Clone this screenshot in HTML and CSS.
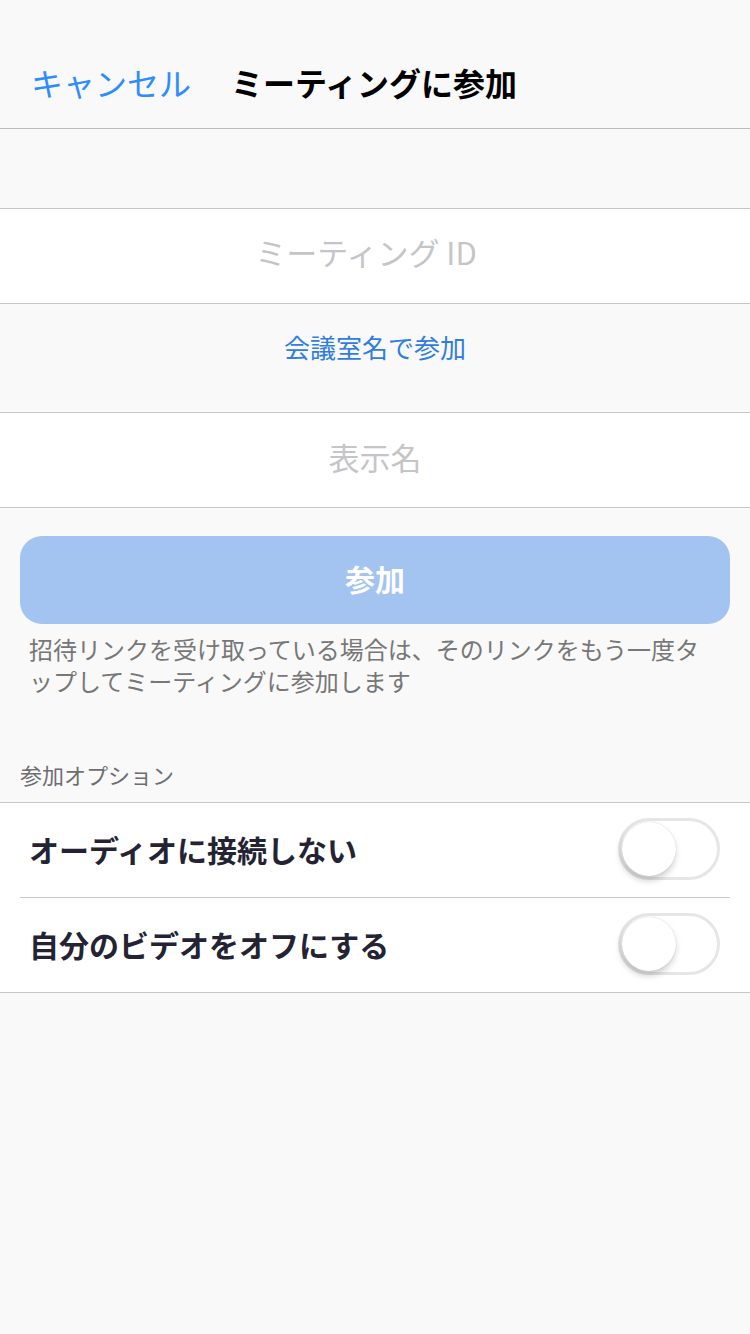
FILE: index.html
```html
<!DOCTYPE html>
<html lang="ja">
<head>
<meta charset="utf-8">
<title>ミーティングに参加</title>
<link rel="stylesheet" href="styles.css">
</head>
<body>
<div class="page">
  <header class="nav">
    <span class="nav-cancel">キャンセル</span>
    <span class="nav-title">ミーティングに参加</span>
  </header>
  <div class="spacer"></div>
  <div class="field field-id"><span class="placeholder">ミーティング ID</span></div>
  <div class="link-area"><span class="link">会議室名で参加</span></div>
  <div class="field field-name"><span class="placeholder">表示名</span></div>
  <div class="actions">
    <div class="join-btn">参加</div>
    <p class="help">招待リンクを受け取っている場合は、そのリンクをもう一度タップしてミーティングに参加します</p>
  </div>
  <div class="section-label">参加オプション</div>
  <div class="options">
    <div class="option">
      <span class="option-text">オーディオに接続しない</span>
      <span class="toggle"><span class="knob"></span></span>
    </div>
    <div class="option">
      <span class="option-text">自分のビデオをオフにする</span>
      <span class="toggle"><span class="knob"></span></span>
    </div>
  </div>
</div>
</body>
</html>
```
FILE: styles.css
```css
* { box-sizing: border-box; }
html, body {
  margin: 0;
  padding: 0;
  background: #f9f9f9;
}
body {
  font-family: "Noto Sans CJK JP", "Noto Sans", sans-serif;
  width: 750px;
  min-height: 1334px;
}
.nav {
  height: 129px;
  padding-top: 36px;
  padding-left: 31px;
  display: flex;
  align-items: center;
  gap: 40px;
  border-bottom: 1px solid #bdbdbd;
}
.nav-cancel {
  font-size: 32px;
  color: #2d8cff;
  line-height: 1;
}
.nav-title {
  font-size: 32px;
  font-weight: bold;
  color: #000;
  line-height: 1;
}
.spacer { height: 79px; }
.field {
  height: 96px;
  background: #fff;
  border-top: 1px solid #c8c8c8;
  border-bottom: 1px solid #c8c8c8;
  display: flex;
  align-items: center;
  justify-content: center;
}
.field-id { padding: 0 18px 10px 0; }
.field-name { padding-bottom: 8px; }
.placeholder {
  font-size: 31px;
  color: #c5c5c9;
  line-height: 1;
}
.link-area {
  height: 108px;
  display: flex;
  align-items: center;
  justify-content: center;
  padding-bottom: 22px;
}
.link {
  font-size: 26px;
  color: #2f7de1;
  line-height: 1;
}
.actions {
  padding: 28px 20px 0;
}
.join-btn {
  height: 88px;
  border-radius: 22px;
  background: #a3c3f0;
  color: #fff;
  font-size: 30px;
  font-weight: bold;
  display: flex;
  align-items: center;
  justify-content: center;
  padding-bottom: 4px;
}
.help {
  margin: 9px 0 0;
  padding: 0 9px;
  font-size: 24px;
  line-height: 32px;
  color: #777;
}
.section-label {
  margin-top: 62px;
  padding-left: 20px;
  font-size: 22px;
  line-height: 30px;
  color: #6d6d72;
}
.options {
  margin-top: 13px;
  background: #fff;
  border-top: 1px solid #c8c8c8;
  border-bottom: 1px solid #c8c8c8;
}
.option {
  margin: 0 20px;
  height: 95px;
  padding: 0 10px 3px 9px;
  display: flex;
  align-items: center;
  justify-content: space-between;
}
.option + .option {
  border-top: 1px solid #c8c8c8;
  height: 95px;
}
.option:first-child { height: 94px; }
.option-text {
  font-size: 30px;
  font-weight: bold;
  color: #232333;
  line-height: 1;
}
.toggle {
  width: 102px;
  height: 62px;
  border-radius: 31px;
  border: 3px solid #e6e6e6;
  background: #fff;
  display: flex;
  align-items: center;
  padding-left: 1px;
}
.knob {
  width: 54px;
  height: 54px;
  border-radius: 50%;
  background: #fff;
  box-shadow: -1px 4px 7px rgba(0, 0, 0, 0.22), 0 0 1px rgba(0, 0, 0, 0.2);
}
```
